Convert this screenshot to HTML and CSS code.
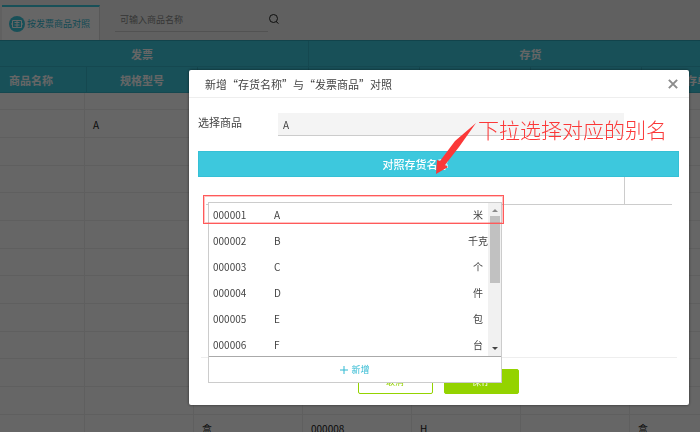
FILE: index.html
```html
<!DOCTYPE html>
<html lang="zh-CN">
<head>
  <meta charset="UTF-8" />
  <meta name="viewport" content="width=device-width, initial-scale=1.0"/>
  <title>按发票商品对照</title>
  <link rel="stylesheet" href="styles.css">
</head>
<body>

  <header class="topbar">
    <button class="tab">
      <svg class="tab-icon" viewBox="0 0 16 16" aria-hidden="true">
        <circle cx="8" cy="8" r="8" fill="#3dc8dd"/>
        <path d="M3.5 4.5h9v7h-9zM5.5 6.5h5M5.5 9h5M8 4.5v7M2 8h1.5M12.5 8H14" fill="none" stroke="#fff"/>
      </svg>
      按发票商品对照
    </button>
    <div class="search">
      <input type="text" id="search" aria-label="商品名称" placeholder="可输入商品名称" />
      <svg class="search-icon" viewBox="0 0 12 12" aria-hidden="true">
        <circle cx="5.5" cy="5.5" r="4" fill="none" stroke="#222"/>
        <path d="M8 8.5l2.5 2" stroke="#222"/>
      </svg>
    </div>
  </header>

  <main class="grid-area">
    <table class="grid-head">
      <colgroup><col class="first"><col><col><col><col><col><col></colgroup>
      <tr><th colspan="3">发票</th><th colspan="4">存货</th></tr>
      <tr><th>商品名称</th><th>规格型号</th><th></th><th></th><th></th><th></th><th>库存单位</th></tr>
    </table>
    <table class="grid-body">
      <colgroup><col class="first"><col><col><col><col><col><col></colgroup>
      <tr class="short"><td></td><td></td><td></td><td></td><td></td><td></td><td></td></tr>
      <tr><td></td><td>A</td><td></td><td></td><td></td><td></td><td></td></tr>
      <tr><td></td><td></td><td></td><td></td><td></td><td></td><td></td></tr>
      <tr><td></td><td></td><td></td><td></td><td></td><td></td><td></td></tr>
      <tr><td></td><td></td><td></td><td></td><td></td><td></td><td></td></tr>
      <tr><td></td><td></td><td></td><td></td><td></td><td></td><td></td></tr>
      <tr><td></td><td></td><td></td><td></td><td></td><td></td><td></td></tr>
      <tr><td></td><td></td><td></td><td></td><td></td><td></td><td></td></tr>
      <tr><td></td><td></td><td></td><td></td><td></td><td></td><td></td></tr>
      <tr><td></td><td></td><td></td><td></td><td></td><td></td><td></td></tr>
      <tr><td></td><td></td><td></td><td></td><td></td><td></td><td></td></tr>
      <tr><td></td><td></td><td></td><td></td><td></td><td></td><td></td></tr>
      <tr><td></td><td></td><td>盒</td><td>000008</td><td>H</td><td></td><td>盒</td></tr>
    </table>
  </main>

  <div class="overlay">
    <section class="modal" role="dialog" aria-labelledby="modal-title">
      <div class="modal-header">
        <h2 id="modal-title">新增“存货名称”与“发票商品”对照</h2>
        <button class="close" aria-label="关闭">
          <svg viewBox="0 0 8 8"><path d="M.7.7l6.6 6.6M7.3.7L.7 7.3" stroke="#8c8c8c" stroke-width="1.6"/></svg>
        </button>
      </div>

      <div class="modal-body">
        <div class="field">
          <label for="product">选择商品</label>
          <input type="text" id="product" value="A" readonly />
        </div>

        <div class="match-head"><span>对照存货名称</span></div>
        <div class="match-row">
          <input type="text" class="match-input" aria-label="对照存货名称" />

          <!-- 存货下拉 -->
          <div class="dropdown">
            <div class="dropdown-main">
              <ul class="options">
                <li><span>000001</span><span>A</span><span class="unit">米</span></li>
                <li><span>000002</span><span>B</span><span class="unit">千克</span></li>
                <li><span>000003</span><span>C</span><span class="unit">个</span></li>
                <li><span>000004</span><span>D</span><span class="unit">件</span></li>
                <li><span>000005</span><span>E</span><span class="unit">包</span></li>
                <li><span>000006</span><span>F</span><span class="unit">台</span></li>
              </ul>
              <div class="scrollbar">
                <svg viewBox="0 0 6 4"><path d="M0 4l3-3 3 3z" fill="#8c8c8c"/></svg>
                <div class="thumb"></div>
                <svg viewBox="0 0 6 4"><path d="M0 0l3 3 3-3z" fill="#444"/></svg>
              </div>
            </div>
            <button class="add">
              <svg viewBox="0 0 8 8" aria-hidden="true"><path d="M4 0v8M0 4h8" stroke="#2fb9d2"/></svg>
              新增
            </button>
          </div>
        </div>
      </div>

      <div class="modal-footer">
        <button class="btn">取消</button>
        <button class="btn btn-save">保存</button>
      </div>

      <!-- 标注 -->
      <div class="mark-box"></div>
      <svg class="mark-arrow" viewBox="0 0 42 52" aria-hidden="true">
        <path d="M41 0L20 18L5 38L2 37L1 51L13 44L10 42L24 24Z" fill="#fb3838"/>
      </svg>
      <div class="mark-text">下拉选择对应的别名</div>
    </section>
  </div>

</body>
</html>
```
FILE: styles.css
```css
:root {
  --accent: #3dc8dd;
  --green: #94d300;
  --red: #fb3838;
  --text: #444;
}

* {
  box-sizing: border-box;
}

body {
  margin: 0;
  height: 100vh;
  overflow: hidden;
  font-family: "Noto Sans CJK SC", sans-serif;
  font-size: 9px;
  line-height: 14px;
  color: var(--text);
  background: #fff;
}

button, input {
  font: inherit;
  color: inherit;
  border: none;
  background: none;
  padding: 0;
  margin: 0;
}

.topbar {
  display: flex;
  height: 40px;
  padding: 5px 0 0 2px;
  background: #eff1ef;
}

.tab {
  display: flex;
  align-items: center;
  gap: 2px;
  width: 98px;
  padding-left: 7px;
  border-top: 2px solid var(--accent);
  border-right: 1px solid #ddd;
  background: #fff;
  color: #2fb9d2;
  white-space: nowrap;
}

.tab-icon {
  width: 16px;
  height: 16px;
}

.search {
  display: flex;
  align-items: center;
  height: 27px;
  margin-left: 15px;
}

.search input {
  width: 153px;
  height: 27px;
  padding: 2px 5px 0;
  border-bottom: 1px solid #ccc;
}

.search input::placeholder {
  color: #888;
}

.search-icon {
  width: 12px;
  height: 12px;
}

.grid-area {
  overflow: hidden;
}

table {
  table-layout: fixed;
  border-collapse: separate;
  border-spacing: 0;
}

col {
  width: 109px;
}

.grid-head {
  width: 777px;
  margin-left: -24px;
  border-top: 1px solid #2fa8bb;
  background: var(--accent);
  color: #fff;
  font-size: 11px;
}

.grid-head col {
  width: 111px;
}

.grid-head th {
  height: 26px;
  padding: 0;
  border-right: 1px solid #35b4c8;
  border-bottom: 1px solid #35b4c8;
}

.grid-body {
  width: 764px;
  margin-left: -25px;
  font-size: 10px;
}

.grid-body .first {
  width: 110px;
}

.grid-body td {
  height: 28px;
  padding: 2px 8px 0;
  border-right: 1px solid #eee;
  border-bottom: 1px solid #eee;
  color: #222;
}

.grid-body tr:nth-child(3n+1) td {
  height: 27px;
}

.grid-body .short:first-child td {
  height: 17px;
}

.overlay {
  position: fixed;
  inset: 0;
  display: flex;
  justify-content: flex-end;
  align-items: flex-start;
  padding: 70px 11px 0;
  background: rgba(0, 0, 0, 0.6);
}

.modal {
  position: relative;
  width: 500px;
  background: #fff;
  border-radius: 2px;
  box-shadow: 0 0 3px rgba(0, 0, 0, 0.6);
}

.modal-header {
  display: flex;
  justify-content: space-between;
  align-items: center;
  height: 28px;
  padding: 0 11px 0 16px;
  border-bottom: 1px solid #eee;
}

.modal-header h2 {
  margin: 0;
  font-size: 11px;
  font-weight: normal;
}

.close {
  display: flex;
}

.close svg {
  width: 10px;
  height: 10px;
}

.modal-body {
  padding: 15px 10px 0 9px;
}

.field {
  display: flex;
}

.field label {
  width: 80px;
  padding-top: 2px;
  font-size: 11px;
}

.field input {
  width: 346px;
  height: 23px;
  padding: 0 5px;
  border-bottom: 1px solid #ccc;
  background: #f4f4f4;
  font-size: 10px;
}

.match-head {
  height: 26px;
  margin-top: 15px;
  padding: 0 54px 0 8px;
  border: 1px solid #35c0d6;
  background: var(--accent);
  color: #fff;
  font-size: 11px;
  font-weight: 500;
  line-height: 24px;
  text-align: center;
}

.match-row {
  position: relative;
  height: 28px;
  margin: 0 7px 0 8px;
  border-bottom: 1px solid #ccc;
}

.match-input {
  width: 419px;
  height: 27px;
  border-right: 1px solid #ccc;
}

.dropdown {
  position: absolute;
  top: 25px;
  left: 2px;
  width: 294px;
  border: 1px solid #ccc;
  background: #fff;
}

.dropdown-main {
  display: flex;
  border-bottom: 1px solid #aaa;
}

.options {
  flex: 1;
  height: 153px;
  margin: 0;
  padding: 0;
  overflow: hidden;
  list-style: none;
  font-size: 10px;
}

.options li {
  display: grid;
  grid-template-columns: 61px 1fr 20px;
  height: 26px;
  padding: 0 0 0 4px;
  line-height: 24px;
}

.options .unit {
  text-align: center;
}

.scrollbar {
  display: flex;
  flex-direction: column;
  align-items: center;
  width: 13px;
  padding: 5px 0;
  background: #f1f1f1;
}

.scrollbar svg {
  width: 6px;
  height: 4px;
}

.thumb {
  width: 10px;
  height: 67px;
  margin: 4px 0 auto;
  background: #c1c1c1;
}

.add {
  display: flex;
  align-items: center;
  justify-content: center;
  gap: 3px;
  width: 100%;
  height: 25px;
  color: #2fb9d2;
}

.add svg {
  width: 8px;
  height: 8px;
}

.modal-footer {
  display: flex;
  justify-content: center;
  gap: 11px;
  margin: 152px 12px 0;
  padding: 11px 2px 11px 0;
  border-top: 1px solid #eee;
}

.btn {
  width: 75px;
  height: 25px;
  border: 1px solid var(--green);
  border-radius: 2px;
  color: var(--green);
}

.btn-save {
  background: var(--green);
  color: #fff;
}

.mark-box {
  position: absolute;
  top: 125px;
  left: 14px;
  width: 301px;
  height: 29px;
  border: 1px solid #ff5a5a;
  box-shadow: inset 0 0 0 1px rgba(255, 56, 56, 0.3);
}

.mark-arrow {
  position: absolute;
  top: 53px;
  left: 246px;
  width: 42px;
  height: 52px;
}

.mark-text {
  position: absolute;
  top: 45px;
  left: 289px;
  color: var(--red);
  font-size: 21px;
  font-weight: 300;
  line-height: 28px;
  white-space: nowrap;
}
```
